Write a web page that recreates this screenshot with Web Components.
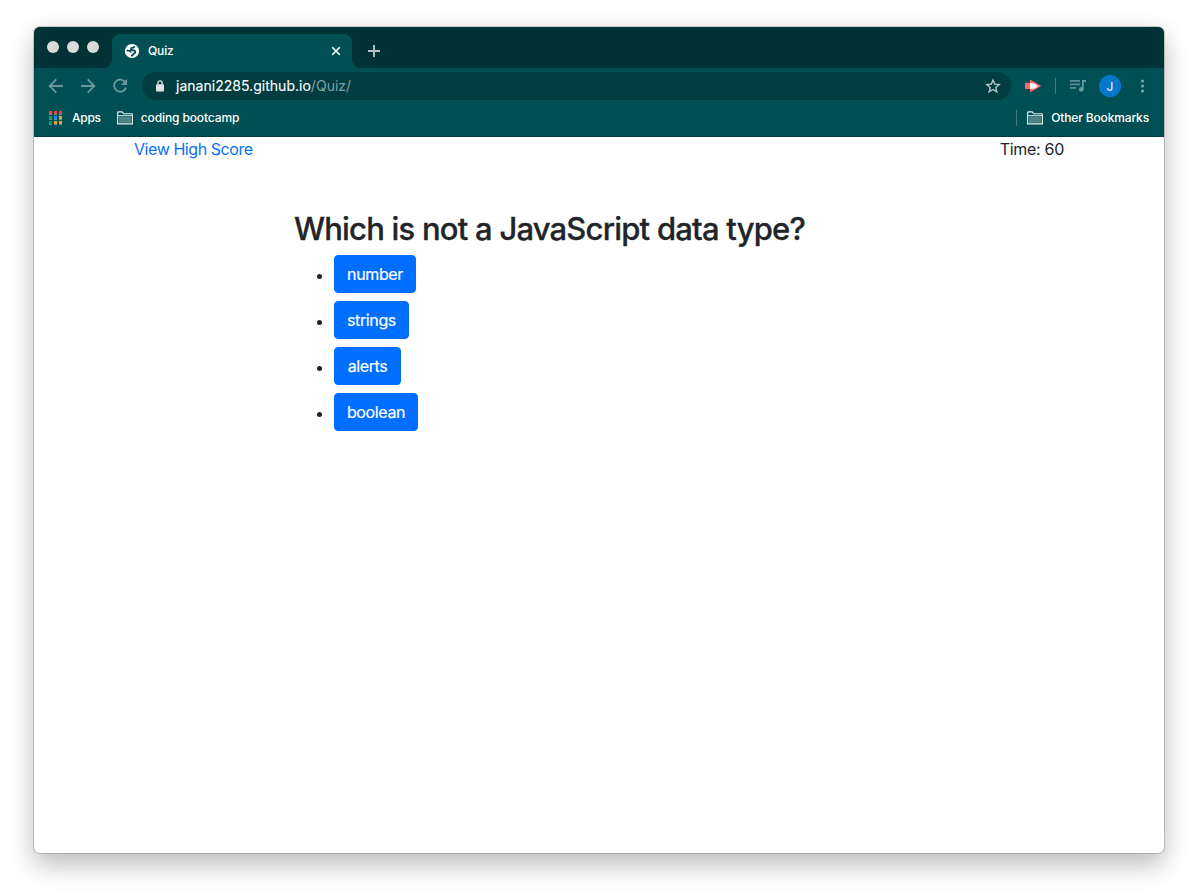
<!DOCTYPE html>
<html lang="en">
<head>
<meta charset="utf-8">
<title>Quiz</title>
<style>
html,body{margin:0;height:100%;background:#fff;overflow:hidden}
body{font-family:Inter,"Liberation Sans",sans-serif;color:#212529}
</style>
</head>
<body>
<browser-window>
  <tab-strip slot="tabs"><span>Quiz</span></tab-strip>
  <nav-bar slot="nav"><span slot="host">janani2285.github.io</span><span slot="path">/Quiz/</span></nav-bar>
  <bookmark-bar slot="bookmarks"></bookmark-bar>
  <quiz-page></quiz-page>
</browser-window>
<script>
const define = (name, html) => {
  const t = document.createElement('template');
  t.innerHTML = html;
  customElements.define(name, class extends HTMLElement {
    constructor() {
      super();
      this.attachShadow({mode: 'open'}).appendChild(t.content.cloneNode(true));
    }
  });
};

define('browser-window', `
<style>
:host{display:block;padding:27px 34px 42px;box-sizing:border-box;height:100vh}
.win{display:flex;flex-direction:column;height:826px;border-radius:6px;background:#fff;
 box-shadow:0 0 0 1px rgba(0,0,0,.16),0 13px 26px rgba(0,0,0,.23),0 0 24px rgba(0,0,0,.06)}
.chrome{border-radius:6px 6px 0 0;overflow:hidden;background:#004f54;border-bottom:1px solid #003c40;height:109px;flex:none}
</style>
<div class="win"><div class="chrome"><slot name="tabs"></slot><slot name="nav"></slot><slot name="bookmarks"></slot></div><slot></slot></div>`);

define('tab-strip', `
<style>
:host{display:flex;height:41px;background:#003236;align-items:flex-end;color:#fff;font-size:12px}
.lights{display:flex;gap:8px;padding:0 6px 15px 13px;align-self:flex-end}
.lights i{width:12px;height:12px;border-radius:50%;background:#d9dad9}
.tab{position:relative;margin-left:7px;width:240px;height:34px;box-sizing:border-box;background:#004f54;border-radius:8px 8px 0 0;display:flex;align-items:center;padding:0 11px 0 12px}
.tab::before,.tab::after{content:"";position:absolute;bottom:0;width:8px;height:8px}
.tab::before{left:-8px;background:radial-gradient(circle at 0 0,transparent 7.5px,#004f54 8px)}
.tab::after{right:-8px;background:radial-gradient(circle at 100% 0,transparent 7.5px,#004f54 8px)}
.name{margin-left:8px;flex:1;font-weight:500;letter-spacing:-.15px;line-height:16px}
svg{display:block}
.plus{margin:0 0 11px 16px}
</style>
<div class="lights"><i></i><i></i><i></i></div>
<div class="tab">
<svg width="16" height="16" viewBox="0 0 16 16"><circle cx="8" cy="8" r="7.1" fill="#fff"/><path d="M10.6 3.4Q10 4.9 8.2 4.9 6.8 5.1 7.1 6.5 8 7.4 9.8 7.4 11.6 7.8 11.2 9.6 9.8 10 9.4 11.2 8.6 12.9 7 12.9M2.6 7.6H5Q6.6 7.8 6.6 9.4" fill="none" stroke="#004f54" stroke-width="1.9"/></svg>
<span class="name"><slot></slot></span>
<svg width="10" height="10" viewBox="0 0 10 10" stroke="#fff" stroke-width="1.6"><path d="M1.2 1.2 8.8 8.8M8.8 1.2 1.2 8.8"/></svg>
</div>
<svg class="plus" width="12" height="12" viewBox="0 0 12 12" stroke="#b5c5c6" stroke-width="1.9"><path d="M6 0V12M0 6H12"/></svg>`);

define('nav-bar', `
<style>
:host{display:flex;height:36px;align-items:center;box-sizing:border-box;padding:0 13px 0 14px;color:#fff}
svg{display:block;flex:none}
.back{margin-right:16px}.fwd{margin-right:16px}.re{margin-right:14px}
.omni{width:869px;height:28px;border-radius:14px;background:#003c40;display:flex;align-items:center;box-sizing:border-box;padding:0 10px 0 13px;font-size:14px;line-height:20px}
.lock{margin-right:11px}
.url{flex:1;letter-spacing:.02px}
.host{-webkit-text-stroke:.1px #fff}
.path{color:#80a2a4}
.ext{margin:0 13px 0 14px}
.sep{width:1px;height:16px;background:#46797d;margin-right:14px}
.av{width:22px;height:22px;border-radius:50%;background:#0479cc;display:flex;align-items:center;justify-content:center;font-size:12px;margin:0 19px 0 12px}
</style>
<svg class="back" width="16" height="16" viewBox="0 0 16 16" fill="none" stroke="#6b999b" stroke-width="1.8"><path d="M15 8H2M8.3 1.3 1.6 8l6.7 6.7"/></svg>
<svg class="fwd" width="16" height="16" viewBox="0 0 16 16" fill="none" stroke="#6b999b" stroke-width="1.8"><path d="M1 8H14M7.7 1.3 14.4 8l-6.7 6.7"/></svg>
<svg class="re" width="16" height="16" viewBox="0 0 16 16"><path d="M13.3 4.2A6.1 6.1 0 1 0 14 9.6" fill="none" stroke="#6b999b" stroke-width="1.8"/><path d="M15 1V7H9z" fill="#6b999b"/></svg>
<div class="omni">
<svg class="lock" width="10" height="12" viewBox="0 0 10 12"><rect x="1" y="4.2" width="8" height="7.3" rx=".8" fill="#dfe5e5"/><path d="M2.9 5V3a2.1 2.1 0 0 1 4.2 0V5" fill="none" stroke="#dfe5e5" stroke-width="1.3"/></svg>
<span class="url"><span class="host"><slot name="host"></slot></span><span class="path"><slot name="path"></slot></span></span>
<svg width="16" height="16" viewBox="0 0 16 16" fill="none" stroke="#b8c6c7" stroke-width="1.4"><path d="m8 2 1.7 4.1 4.5.4-3.4 2.9 1 4.4L8 11.5l-3.8 2.3 1-4.4L1.8 6.5l4.5-.4z"/></svg>
</div>
<svg class="ext" width="17" height="14" viewBox="0 0 17 14"><path d="M0 3.8H5V0.4L16.2 7 5 13.4V10H0z" fill="#fa696b"/><path d="M5 4.2H8.5L11.7 5.7V8.6L8.5 9.7H5z" fill="#fff"/><path d="m11.5 5.6 2 1.4-2 1.4z" fill="#fbb"/></svg>
<span class="sep"></span>
<svg width="17" height="14" viewBox="0 0 17 14"><path d="M0 1.9H10M0 5.4H10M0 8.9H6.5" stroke="#5d8f92" stroke-width="1.6"/><path d="M12.8 10.5V2H16" fill="none" stroke="#6b999b" stroke-width="1.8"/><circle cx="11.3" cy="10.4" r="2.3" fill="#6b999b"/></svg>
<span class="av">J</span>
<svg width="4" height="14" viewBox="0 0 4 14" fill="#85aaac"><circle cx="2.5" cy="2" r="1.5"/><circle cx="2.5" cy="7" r="1.5"/><circle cx="2.5" cy="12" r="1.5"/></svg>`);

define('folder-icon', `
<style>:host{display:block;width:17px;height:14px;flex:none}svg{display:block}</style>
<svg width="17" height="14" viewBox="0 0 17 14"><path d="M.6 12.9V1.8Q.6.9 1.5.9H5.2L6.8 2.8H14.6Q15.4 2.8 15.4 3.6V12.9z" fill="#004f54" stroke="#e9f0f0" stroke-width="1.1"/><path d="M1.8 5.4H14.3V11.8H1.8z" fill="#4f8487"/><path d="M1 4.6H15" stroke="#e9f0f0" stroke-width=".9"/></svg>`);

define('bookmark-bar', `
<style>
:host{display:flex;height:28px;align-items:center;box-sizing:border-box;padding:0 15px;color:#fff;font-size:12px;line-height:16px;font-weight:500}
svg{display:block;margin-right:10px}
folder-icon{margin-right:7px}
.a{margin-right:16px;letter-spacing:-.25px}.c{flex:1;letter-spacing:-.12px}.o{letter-spacing:-.14px}
.sep{width:1px;height:16px;background:#46797d;margin-right:10px}
</style>
<svg width="13" height="14" viewBox="0 0 13 14"><g fill="#ff3b3b"><path d="M0 0h3v3H0zM5 0h3v3H5zM10 0h3v3h-3z"/></g><path d="M0 5h3v3H0zM0 10h3v3H0z" fill="#0f9d45"/><path d="M5 5h3v3H5z" fill="#1388f5"/><path d="M10 5h3v3h-3zM10 10h3v3h-3zM5 10h3v3H5z" fill="#f3a527"/><path d="M0 3.4h3M5 3.4h3M10 3.4h3M0 8.4h3M5 8.4h3M10 8.4h3M0 13.4h3M5 13.4h3M10 13.4h3" stroke="#8fa9aa" stroke-width=".8"/></svg>
<span class="a">Apps</span><folder-icon></folder-icon><span class="c">coding bootcamp</span>
<span class="sep"></span><folder-icon></folder-icon><span class="o">Other Bookmarks</span>`);

define('answer-button', `
<style>
:host{display:block}
button{display:block;font:400 16px/24px Inter,"Liberation Sans",sans-serif;letter-spacing:-.38px;-webkit-text-stroke:.2px #fff;color:#fff;background:#006fff;border:1px solid #006fff;border-radius:4px;padding:6px 0;width:var(--w);height:38px;white-space:nowrap}
</style><button><slot></slot></button>`);

define('quiz-page', `
<style>
:host{display:block;font-size:16px;line-height:24px}
header{display:flex;justify-content:space-between;padding:0 100px}
a{color:#0571f5;text-decoration:none;letter-spacing:-.43px}
.time{letter-spacing:-.3px}
main{padding:49px 0 0 260px}
h2{margin:0 0 7px;font-size:31px;line-height:38px;font-weight:500;letter-spacing:-.81px;word-spacing:.1px;-webkit-text-stroke:.3px #212529;white-space:nowrap}
ul{margin:0;padding:0;list-style:none}
li{height:38px;margin-bottom:8px;display:flex;align-items:center}
li::before{content:"";width:5px;height:5px;border-radius:50%;background:#212529;margin:4px 12px 0 23px}
</style>
<header><a href="#">View High Score</a><span class="time">Time: 60</span></header>
<main><h2>Which is not a JavaScript data type?</h2>
<ul><li><answer-button style="--w:82px">number</answer-button></li><li><answer-button style="--w:75px">strings</answer-button></li><li><answer-button style="--w:67px">alerts</answer-button></li><li><answer-button style="--w:84px">boolean</answer-button></li></ul></main>`);
</script>
</body>
</html>
